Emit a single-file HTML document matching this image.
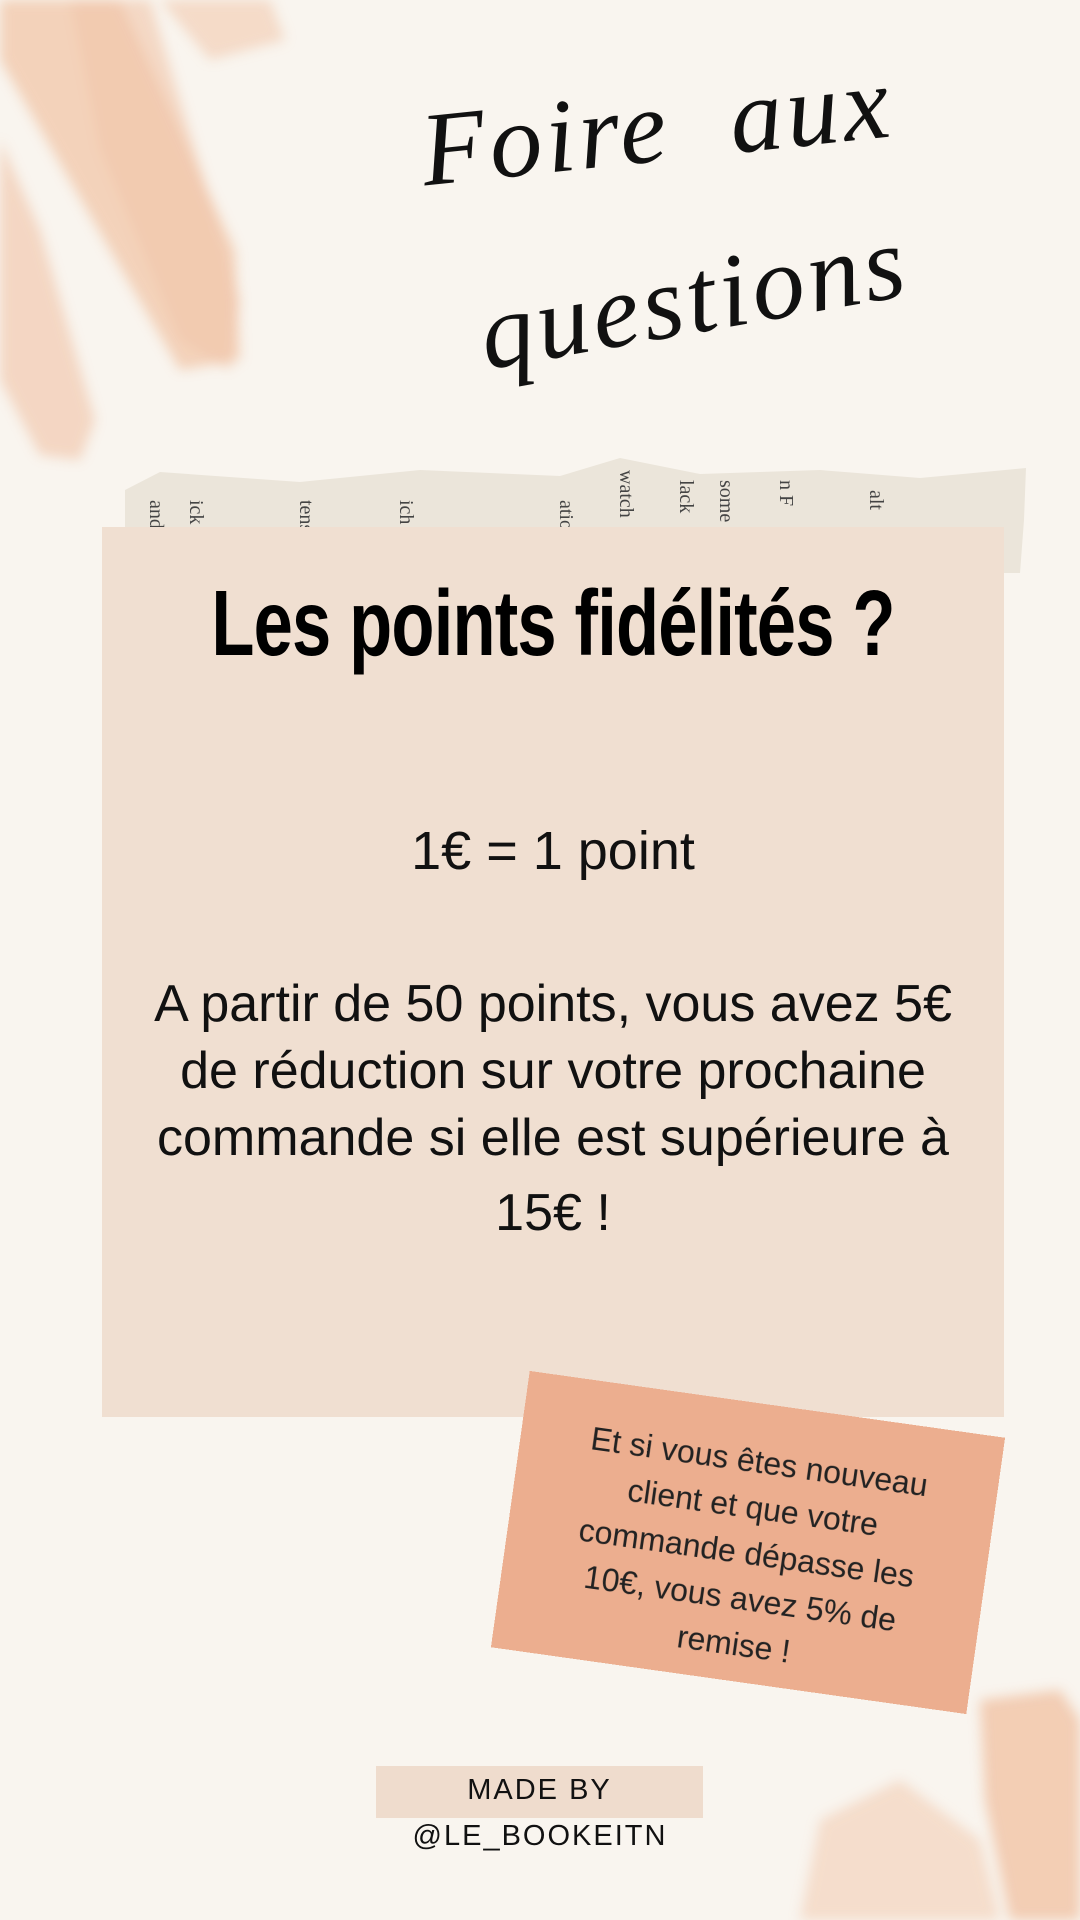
<!DOCTYPE html>
<html><head><meta charset="utf-8"><style>
html,body{margin:0;padding:0}
body{width:1080px;height:1920px;background:#f9f5ef;position:relative;overflow:hidden;font-family:"Liberation Sans",sans-serif}
.abs{position:absolute}
.script{font-family:"Liberation Serif",serif;font-style:italic;font-weight:normal;color:#111;letter-spacing:4px;white-space:nowrap}
</style></head><body>
<svg class="abs" style="left:0;top:0" width="1080" height="1920">
 <defs><filter id="b"><feGaussianBlur stdDeviation="6"/></filter></defs>
 <g filter="url(#b)" opacity="0.75">
  <path d="M0 0 L120 0 L235 250 L240 360 L180 370 L110 250 L0 60Z" fill="#f1c6a8"/>
  <path d="M70 0 L150 0 L240 300 L230 370 L180 340 L100 150Z" fill="#eeb593" opacity="0.6"/>
  <path d="M160 0 L270 0 L285 40 L210 60Z" fill="#f3d2bb"/>
  <path d="M0 140 L40 230 L95 420 L80 460 L40 455 L0 380Z" fill="#f0c2a5" opacity="0.8"/>
  <path d="M980 1700 L1060 1690 L1080 1720 L1080 1920 L1010 1920 L985 1800Z" fill="#f0c0a0"/>
  <path d="M820 1820 L900 1780 L980 1840 L1000 1920 L800 1920Z" fill="#f3cdb4" opacity="0.8"/>
 </g>
 <path d="M125 490 L160 472 L300 482 L420 470 L560 476 L620 458 L700 474 L820 470 L920 478 L1026 468 L1024 520 L1020 573 L1004 573 L1004 527 L125 527Z" fill="#ebe5da"/>
 <g fill="#444" font-family="Liberation Serif" font-size="20">
  <text x="150" y="500" transform="rotate(90 150 500)">and</text>
  <text x="190" y="500" transform="rotate(90 190 500)">ick big</text>
  <text x="300" y="500" transform="rotate(90 300 500)">tens</text>
  <text x="400" y="500" transform="rotate(90 400 500)">ich y</text>
  <text x="560" y="500" transform="rotate(90 560 500)">atio</text>
  <text x="620" y="470" transform="rotate(90 620 470)">watch</text>
  <text x="680" y="480" transform="rotate(90 680 480)">lack</text>
  <text x="720" y="480" transform="rotate(90 720 480)">some</text>
  <text x="780" y="480" transform="rotate(90 780 480)">n F</text>
  <text x="870" y="490" transform="rotate(90 870 490)">alt</text>
 </g>
</svg>
<div class="abs script" style="left:415px;top:90px;font-size:105px;transform:rotate(-6deg);transform-origin:left top;">Foire&nbsp;&nbsp;aux</div>
<div class="abs script" style="left:470px;top:275px;font-size:105px;transform:rotate(-10deg);transform-origin:left top;">questions</div>
<div class="abs" style="left:102px;top:527px;width:902px;height:890px;background:#f0dfd1"></div>
<div class="abs" style="left:102px;top:575px;width:902px;text-align:center;font-weight:bold;font-size:84px;color:#000;transform:scale(0.84,1.1);letter-spacing:-1px;white-space:nowrap">Les points fidélités ?</div>
<div class="abs" style="left:102px;top:820px;width:902px;text-align:center;font-size:54px;color:#111">1€ = 1 point</div>
<div class="abs" style="left:62px;top:971px;width:982px;text-align:center;font-size:52px;line-height:67px;color:#111;white-space:nowrap">A partir de 50 points, vous avez 5€<br>de réduction sur votre prochaine<br>commande si elle est supérieure à<br><span style="display:inline-block;margin-top:8px">15€ !</span></div>
<div class="abs" style="left:508px;top:1403px;width:480px;height:279px;background:#ecae8f;transform:rotate(8deg);display:flex;align-items:center;justify-content:center;text-align:center">
 <div style="font-size:32px;line-height:46px;color:#222;white-space:nowrap;margin-top:20px">Et si vous êtes nouveau<br>client et que votre<br>commande dépasse les<br>10€, vous avez 5% de<br>remise !</div>
</div>
<div class="abs" style="left:376px;top:1766px;width:327px;height:52px;background:#efdccd"></div>
<div class="abs" style="left:376px;top:1774px;width:327px;text-align:center;font-size:29px;letter-spacing:2px;color:#111">MADE BY</div>
<div class="abs" style="left:340px;top:1820px;width:400px;text-align:center;font-size:29px;letter-spacing:2px;color:#111">@LE_BOOKEITN</div>
</body></html>
